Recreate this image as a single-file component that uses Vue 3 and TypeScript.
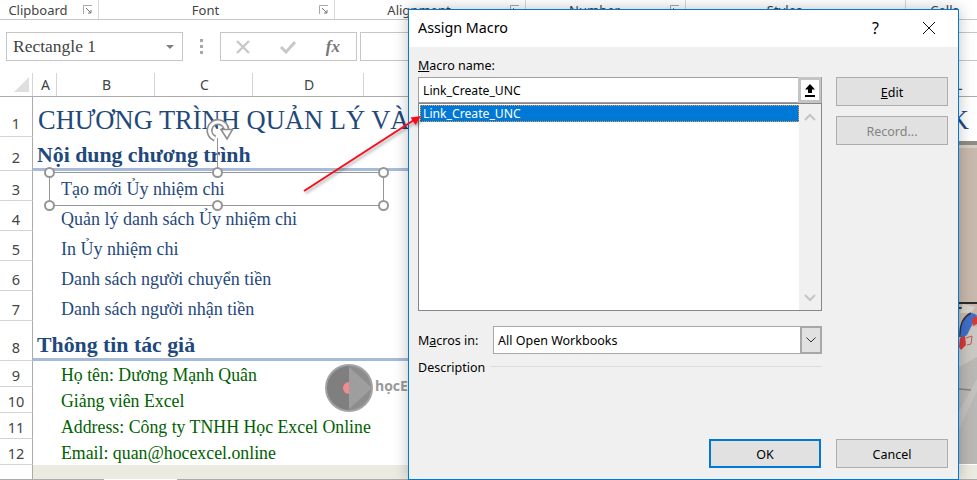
<script setup lang="ts">
interface RibbonGroup {
  label: string;
  launcher: boolean;
  width: number;
}

interface SheetRow {
  num: number;
  height: number;
  kind: "title" | "head" | "blue" | "green" | "empty";
  text: string;
}

const ribbonGroups: RibbonGroup[] = [
  { label: "Clipboard", launcher: true, width: 99 },
  { label: "Font", launcher: true, width: 236 },
  { label: "Alignment", launcher: true, width: 191 },
  { label: "Number", launcher: true, width: 160 },
  { label: "Styles", launcher: false, width: 220 },
  { label: "Cells", launcher: false, width: 100 }
];

const sheetRows: SheetRow[] = [
  { num: 1, height: 40, kind: "title", text: "CHƯƠNG TRÌNH QUẢN LÝ VÀ" },
  { num: 2, height: 34, kind: "head", text: "Nội dung chương trình" },
  { num: 3, height: 30, kind: "empty", text: "" },
  { num: 4, height: 30, kind: "blue", text: "Quản lý danh sách Ủy nhiệm chi" },
  { num: 5, height: 30, kind: "blue", text: "In Ủy nhiệm chi" },
  { num: 6, height: 30, kind: "blue", text: "Danh sách người chuyển tiền" },
  { num: 7, height: 30, kind: "blue", text: "Danh sách người nhận tiền" },
  { num: 8, height: 40, kind: "head", text: "Thông tin tác giả" },
  { num: 9, height: 26, kind: "green", text: "Họ tên: Dương Mạnh Quân" },
  { num: 10, height: 26, kind: "green", text: "Giảng viên Excel" },
  { num: 11, height: 26, kind: "green", text: "Address: Công ty TNHH Học Excel Online" },
  { num: 12, height: 26, kind: "green", text: "Email: quan@hocexcel.online" }
];

const columns = [
  { name: "A", cls: "col-a" },
  { name: "B", cls: "col-b" },
  { name: "C", cls: "col-b" },
  { name: "D", cls: "col-d" }
];

const handles = ["tl", "tm", "tr", "bl", "bm", "br"];
</script>

<template>
  <main class="page">
    <section class="ribbon">
      <div
        v-for="group in ribbonGroups"
        :key="group.label"
        class="ribbon-group"
        :style="{ width: group.width + 'px' }"
      >
        <span class="ribbon-label">{{ group.label }}</span>
        <svg v-if="group.launcher" class="launcher" width="10" height="10" viewBox="0 0 10 10">
          <path d="M0.5 9V0.5H9" fill="none" stroke="#a8a8a8" />
          <path d="M3 3L8 8M8 5V8H5" fill="none" stroke="#777" />
        </svg>
      </div>
    </section>

    <section class="formula-bar">
      <div class="name-box">
        <span>Rectangle 1</span>
        <i class="caret"></i>
      </div>
      <div class="grip"><i></i><i></i><i></i></div>
      <div class="fx-box">
        <svg width="16" height="14" viewBox="0 0 16 14">
          <path d="M2 1L14 13M14 1L2 13" stroke="#c8c8c8" stroke-width="2.4" fill="none" />
        </svg>
        <svg width="18" height="14" viewBox="0 0 18 14">
          <path d="M2 7L7 12L16 2" stroke="#c8c8c8" stroke-width="3" fill="none" />
        </svg>
        <span class="fx">fx</span>
      </div>
      <div class="formula-input"></div>
    </section>

    <section class="col-headers">
      <div class="corner"><i></i></div>
      <div v-for="col in columns" :key="col.name" class="col-head" :class="col.cls">{{ col.name }}</div>
      <div class="col-spacer"></div>
      <div class="col-tail">L</div>
    </section>

    <section class="sheet">
      <div
        v-for="row in sheetRows"
        :key="row.num"
        class="sheet-row"
        :style="{ height: row.height + 'px' }"
      >
        <div class="row-num" :class="{ tall: row.height >= 34 }">{{ row.num }}</div>
        <div class="cell" :class="row.kind">
          <span>{{ row.text }}</span>
          <span v-if="row.kind === 'title'" class="title-tail">K</span>
        </div>
      </div>
      <div class="sheet-rest">
        <div class="row-num"></div>
        <div class="rest-fill"></div>
      </div>
      <div class="sheet-edge"></div>
    </section>

    <svg class="photo" width="18" height="323" viewBox="0 0 18 323">
      <rect width="18" height="323" fill="#c9b8ac" />
      <rect width="18" height="4" fill="#8f8b86" />
      <rect y="4" width="18" height="3" fill="#d6cfc6" />
      <path d="M0 186H18V323H0Z" fill="#cbc7c2" />
      <path d="M0 226L18 216V323H0Z" fill="#bab8b5" />
      <path d="M0 270L18 238V250L0 288Z" fill="#c4c2bf" />
      <rect y="161" width="18" height="2" fill="#2c2c2c" />
      <rect y="166" width="14" height="2" fill="#3a3a3a" />
      <path d="M1 172L4 163L16 166L12 172Z" fill="#d8d2cc" />
      <path d="M1 192Q2 176 13 172L18 174Q13 184 8 194L2 198Z" fill="#3f6fc8" />
      <path d="M1 196Q0 178 12 172" stroke="#2f3440" stroke-width="1.4" fill="none" />
      <path d="M1 197L6 195L7 204L2 209L0 206Z" fill="#d83a32" />
      <path d="M13 178L18 175V183L14 185Z" fill="#d83a32" />
      <path d="M7 197L13 195L12 203L8 204" stroke="#c9564f" fill="none" />
      <path d="M0 248L12 249" stroke="#85827f" stroke-width="1.4" fill="none" />
    </svg>

    <div class="shape">
      <span class="shape-text">Tạo mới Ủy nhiệm chi</span>
      <i v-for="h in handles" :key="h" class="handle" :class="h"></i>
      <i class="stem"></i>
      <svg class="rotate" width="30" height="26" viewBox="0 0 30 26">
        <path d="M11 20.5A8.5 8.5 0 1 1 22.5 12" fill="none" stroke="#8e8e8e" stroke-width="6.4" />
        <path d="M11 20.5A8.5 8.5 0 1 1 22.5 12" fill="none" stroke="#fff" stroke-width="3" />
        <path d="M17 11.5H28.5L23 21Z" fill="#fff" stroke="#8e8e8e" stroke-width="1.6" />
      </svg>
    </div>

    <div class="logo">
      <svg width="50" height="50" viewBox="0 0 50 50">
        <circle cx="25" cy="25" r="24" fill="#a2a2a2" />
        <path d="M25 3A22 22 0 0 0 25 47Z" fill="#7f7f7f" />
        <path d="M25 3A22 22 0 0 1 25 47Z" fill="#8d8d8d" />
        <path d="M25 4L48 25L25 46Z" fill="#9e9e9e" />
        <path d="M25 19A6 6 0 0 0 25 31Z" fill="#f28b8e" />
      </svg>
      <span class="logo-text">họcE</span>
    </div>

    <div class="dialog">
      <header class="dialog-title">
        <span class="title-text">Assign Macro</span>
        <span class="help">?</span>
        <svg class="close" width="14" height="14" viewBox="0 0 14 14">
          <path d="M1 1L13 13M13 1L1 13" stroke="#111" stroke-width="1" fill="none" />
        </svg>
      </header>

      <div class="dialog-body">
        <div class="left-col">
          <label class="field-label"><u>M</u>acro name:</label>
          <div class="name-input">
            <span>Link_Create_UNC</span>
            <div class="pick-btn">
              <svg width="12" height="14" viewBox="0 0 12 14">
                <path d="M6 1L11 6.5H8V10H4V6.5H1Z" fill="#000" />
                <rect x="1" y="12" width="10" height="2" fill="#000" />
              </svg>
            </div>
          </div>
          <div class="macro-list">
            <div class="list-items">
              <div class="list-selected">Link_Create_UNC</div>
            </div>
            <div class="list-scroll">
              <svg width="12" height="8" viewBox="0 0 12 8">
                <path d="M1 7L6 2L11 7" stroke="#c4c4c4" stroke-width="2" fill="none" />
              </svg>
              <svg width="12" height="8" viewBox="0 0 12 8">
                <path d="M1 1L6 6L11 1" stroke="#c4c4c4" stroke-width="2" fill="none" />
              </svg>
            </div>
          </div>
          <div class="macros-in">
            <span class="macros-label">M<u>a</u>cros in:</span>
            <div class="combo">
              <span>All Open Workbooks</span>
              <div class="combo-btn">
                <svg width="10" height="6" viewBox="0 0 10 6">
                  <path d="M0.5 0.5L5 5L9.5 0.5" stroke="#333" fill="none" />
                </svg>
              </div>
            </div>
          </div>
          <div class="description">
            <span>Description</span>
            <i></i>
          </div>
        </div>

        <div class="right-col">
          <button class="btn"><u>E</u>dit</button>
          <button class="btn disabled">Record...</button>
        </div>
      </div>

      <footer class="dialog-footer">
        <button class="btn primary">OK</button>
        <button class="btn">Cancel</button>
      </footer>
    </div>

    <svg class="arrow" width="977" height="480" viewBox="0 0 977 480">
      <defs>
        <filter id="arrow-shadow" x="-20%" y="-20%" width="140%" height="140%">
          <feDropShadow dx="1.5" dy="2" stdDeviation="1.5" flood-color="#000" flood-opacity="0.35" />
        </filter>
      </defs>
      <g filter="url(#arrow-shadow)">
        <path d="M304 191L414 120" stroke="#f4101c" stroke-width="2" fill="none" />
        <path d="M421 116L410.5 117.5L415.5 125Z" fill="#f4101c" />
      </g>
    </svg>
  </main>
</template>

<style>
html,
body {
  margin: 0;
  background: #fff;
}
</style>

<style scoped>
.page {
  position: relative;
  width: 977px;
  height: 480px;
  overflow: hidden;
  background: #fff;
  font-family: "Noto Sans", sans-serif;
}

.ribbon {
  display: flex;
  height: 20px;
  box-sizing: border-box;
  border-bottom: 1px solid #c6c6c6;
  background: #fff;
}

.ribbon-group {
  flex: none;
  display: flex;
  align-items: center;
  box-sizing: border-box;
  padding-right: 22px;
  border-right: 1px solid #d8d8d8;
  position: relative;
}

.ribbon-label {
  flex: 1;
  text-align: center;
  font-size: 13px;
  color: #444;
}

.launcher {
  position: absolute;
  right: 5px;
  top: 5px;
}

.formula-bar {
  display: flex;
  align-items: center;
  height: 53px;
  box-sizing: border-box;
  padding: 0 0 0 6px;
}

.name-box {
  width: 177px;
  height: 29px;
  box-sizing: border-box;
  border: 1px solid #c6c6c6;
  display: flex;
  align-items: center;
  justify-content: space-between;
  padding: 0 8px 0 6px;
  font-family: "Liberation Serif", serif;
  font-size: 17.5px;
  color: #444;
}

.caret {
  width: 0;
  height: 0;
  border-left: 4px solid transparent;
  border-right: 4px solid transparent;
  border-top: 4px solid #808080;
}

.grip {
  width: 37px;
  display: flex;
  flex-direction: column;
  align-items: center;
  gap: 3px;
}

.grip i {
  width: 3px;
  height: 3px;
  background: #a8a8a8;
}

.fx-box {
  width: 137px;
  height: 29px;
  box-sizing: border-box;
  border: 1px solid #c6c6c6;
  display: flex;
  align-items: center;
  justify-content: space-between;
  padding: 0 16px 0 14px;
}

.fx {
  font-family: "Liberation Serif", serif;
  font-style: italic;
  font-weight: 700;
  font-size: 17px;
  color: #777;
}

.formula-input {
  flex: 1;
  margin-left: 3px;
  height: 29px;
  box-sizing: border-box;
  border: 1px solid #c6c6c6;
  border-right: 0;
}

.col-headers {
  display: flex;
  height: 24px;
  box-sizing: border-box;
  border-bottom: 1px solid #ababab;
  color: #444;
  font-size: 14px;
}

.corner {
  width: 33px;
  flex: none;
  box-sizing: border-box;
  border-right: 1px solid #d4d4d4;
  position: relative;
}

.corner i {
  position: absolute;
  right: 3px;
  bottom: 4px;
  border-left: 15px solid transparent;
  border-bottom: 15px solid #dfdfdf;
}

.col-head {
  flex: none;
  box-sizing: border-box;
  border-right: 1px solid #d4d4d4;
  padding-left: 2px;
  text-align: center;
  line-height: 24px;
}

.col-a {
  width: 24px;
}

.col-b {
  width: 98px;
}

.col-d {
  width: 111px;
}

.col-spacer {
  width: 591px;
  flex: none;
}

.col-tail {
  line-height: 24px;
}

.sheet {
  display: flex;
  flex-direction: column;
  height: 383px;
}

.sheet-row {
  display: flex;
  flex: none;
}

.row-num {
  width: 33px;
  flex: none;
  box-sizing: border-box;
  border-right: 1px solid #ababab;
  border-bottom: 1px solid #d4d4d4;
  display: flex;
  align-items: flex-end;
  justify-content: center;
  padding-bottom: 1px;
  font-size: 14.5px;
  color: #444;
}

.row-num.tall {
  padding-bottom: 3px;
}

.cell {
  flex: 1;
  min-width: 0;
  box-sizing: border-box;
  font-family: "Liberation Serif", serif;
  white-space: nowrap;
  display: flex;
  align-items: center;
}

.title {
  justify-content: space-between;
  padding: 7px 8px 0 5px;
  font-size: 26.5px;
  color: #1f497d;
}

.head {
  align-items: flex-end;
  padding: 0 0 0 4px;
  border-bottom: 3px solid #a6bad9;
  font-size: 21.8px;
  font-weight: 700;
  color: #1f497d;
}

.blue {
  padding: 6px 0 0 28px;
  font-size: 18px;
  color: #1f497d;
}

.green {
  padding: 2px 0 0 28px;
  font-size: 17.8px;
  color: #006100;
}

.sheet-rest {
  flex: 1;
  display: flex;
}

.sheet-rest .row-num {
  border-bottom: 0;
}

.rest-fill {
  flex: 1;
  background: #ecebe2;
}

.sheet-edge {
  height: 1px;
  flex: none;
  background: linear-gradient(90deg, #ababab 104px, #fff 104px, #fff 177px, #ababab 177px);
}

.photo {
  position: absolute;
  left: 959px;
  top: 141px;
}

.shape {
  position: absolute;
  left: 49px;
  top: 172px;
  width: 335px;
  height: 34px;
  box-sizing: border-box;
  border: 1px solid #969696;
  display: flex;
  align-items: center;
  padding-left: 11px;
}

.shape-text {
  font-family: "Liberation Serif", serif;
  font-size: 18px;
  color: #1f497d;
}

.handle {
  position: absolute;
  width: 11px;
  height: 11px;
  box-sizing: border-box;
  border: 2px solid #969696;
  border-radius: 50%;
  background: #fff;
}

.tl,
.bl {
  left: -6px;
}

.tm,
.bm {
  left: 162px;
}

.tr,
.br {
  right: -6px;
}

.tl,
.tm,
.tr {
  top: -6px;
}

.bl,
.bm,
.br {
  bottom: -6px;
}

.stem {
  position: absolute;
  left: 167px;
  top: -35px;
  width: 1px;
  height: 30px;
  background: #969696;
}

.rotate {
  position: absolute;
  left: 154px;
  top: -55px;
}

.logo {
  position: absolute;
  left: 324px;
  top: 363px;
  display: flex;
  align-items: center;
  gap: 1px;
}

.logo-text {
  margin-bottom: 6px;
  font-family: "Open Sans", sans-serif;
  font-weight: 700;
  font-size: 14px;
  color: #9a9a9a;
}

.dialog {
  position: absolute;
  left: 408px;
  top: 9px;
  width: 551px;
  height: 471px;
  box-sizing: border-box;
  border: 1px solid #0078d7;
  background: #f0f0f0;
  box-shadow: 0 0 14px rgba(0, 0, 0, 0.25);
  display: flex;
  flex-direction: column;
  color: #000;
}

.dialog-title {
  height: 37px;
  flex: none;
  box-sizing: border-box;
  padding: 0 22px 2px 9px;
  background: #fff;
  display: flex;
  align-items: center;
}

.title-text {
  flex: 1;
  font-size: 14.3px;
}

.help {
  font-size: 16px;
  margin-right: 43px;
}

.dialog-body {
  flex: 1;
  display: flex;
  gap: 14px;
  padding: 9px 0 0 9px;
}

.left-col {
  width: 404px;
  display: flex;
  flex-direction: column;
}

.field-label {
  height: 21px;
  font-size: 12.5px;
  line-height: 20px;
}

.name-input {
  height: 26px;
  box-sizing: border-box;
  border: 1px solid #a0a0a0;
  background: #fff;
  display: flex;
  align-items: center;
  justify-content: space-between;
  padding-left: 4px;
  font-size: 12.2px;
}

.pick-btn {
  width: 23px;
  height: 26px;
  flex: none;
  box-sizing: border-box;
  border: 3px solid #c4c4c4;
  border-right-width: 2px;
  background: #fff;
  display: flex;
  align-items: center;
  justify-content: center;
}

.macro-list {
  height: 208px;
  box-sizing: border-box;
  border: 1px solid #85858f;
  background: #fff;
  display: flex;
}

.list-items {
  flex: 1;
  padding: 1px 0 0 1px;
}

.list-selected {
  height: 17px;
  line-height: 15px;
  padding-left: 2px;
  box-sizing: border-box;
  background: #0078d7;
  border: 1px dotted #f0a040;
  color: #fff;
  font-size: 12.2px;
}

.list-scroll {
  width: 22px;
  flex: none;
  background: #f0f0f0;
  display: flex;
  flex-direction: column;
  align-items: center;
  justify-content: space-between;
  padding: 9px 0 8px;
  box-sizing: border-box;
}

.macros-in {
  margin-top: 15px;
  display: flex;
  align-items: center;
  font-size: 12.5px;
}

.macros-label {
  width: 75px;
  flex: none;
}

.combo {
  flex: 1;
  height: 28px;
  box-sizing: border-box;
  border: 1px solid #a8a8a8;
  background: #fff;
  display: flex;
  align-items: center;
  justify-content: space-between;
  padding-left: 4px;
}

.combo-btn {
  width: 22px;
  height: 28px;
  margin: -1px -1px -1px 0;
  flex: none;
  box-sizing: border-box;
  border: 2px solid #a8a8a8;
  background: #e1e1e1;
  display: flex;
  align-items: center;
  justify-content: center;
}

.description {
  margin-top: 5px;
  display: flex;
  align-items: center;
  gap: 5px;
  font-size: 12.5px;
}

.description i {
  flex: 1;
  height: 1px;
  margin-bottom: 3px;
  background: #dcdcdc;
}

.right-col {
  width: 112px;
  display: flex;
  flex-direction: column;
  gap: 10px;
  padding-top: 21px;
}

.btn {
  width: 112px;
  height: 29px;
  box-sizing: border-box;
  border: 1px solid #adadad;
  background: #e1e1e1;
  padding: 2px 0 0;
  font-family: "Noto Sans", sans-serif;
  font-size: 12.5px;
  color: #000;
}

.disabled {
  color: #838383;
}

.primary {
  border: 2px solid #0078d7;
}

.dialog-footer {
  flex: none;
  display: flex;
  justify-content: flex-end;
  gap: 15px;
  padding: 0 10px 11px 0;
}

.arrow {
  position: absolute;
  left: 0;
  top: 0;
  pointer-events: none;
}
</style>
